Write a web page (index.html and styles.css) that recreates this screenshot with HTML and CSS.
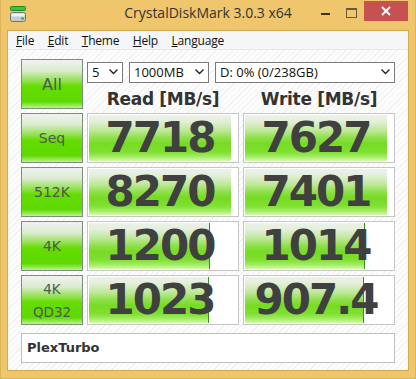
FILE: index.html
```html
<!DOCTYPE html>
<html lang="en">
<head>
  <meta charset="UTF-8" />
  <title>CrystalDiskMark 3.0.3 x64</title>
  <link rel="stylesheet" href="styles.css">
</head>
<body>
  <div class="window">
    <!-- title bar -->
    <div class="titlebar">
      <svg class="app-icon" width="16" height="17" viewBox="0 0 16 17">
        <rect x="0.5" y="0.5" width="15" height="4" rx="1" fill="#3cc43c" stroke="#1f8a1f"/>
        <rect x="0.5" y="6.5" width="15" height="9" rx="2" fill="#c9ccd0" stroke="#6d7278"/>
        <rect x="1.5" y="7.5" width="13" height="3" fill="#eef0f2"/>
        <rect x="11" y="11.5" width="3" height="2" fill="#2fb52f"/>
      </svg>
      <div class="title">CrystalDiskMark 3.0.3 x64</div>
      <div class="controls">
        <div class="ctrl min"><i></i></div>
        <div class="ctrl max"><i></i></div>
        <div class="ctrl close">
          <svg width="10" height="10" viewBox="0 0 10 10">
            <path d="M1 1 L9 9 M9 1 L1 9" stroke="#fff" stroke-width="2"/>
          </svg>
        </div>
      </div>
    </div>

    <div class="client">
      <!-- menu -->
      <div class="menubar">
        <span><u>F</u>ile</span>
        <span><u>E</u>dit</span>
        <span><u>T</u>heme</span>
        <span><u>H</u>elp</span>
        <span><u>L</u>anguage</span>
      </div>

      <div class="main">
        <div class="grid">
          <div class="btn btn-all">All</div>
          <div class="top">
            <div class="selects">
              <div class="sel sel-count">5<svg class="chev" width="9" height="6" viewBox="0 0 9 6"><path d="M0.5 0.5 L4.5 4.5 L8.5 0.5" fill="none" stroke="#222" stroke-width="1.4"/></svg></div>
              <div class="sel sel-size">1000MB<svg class="chev" width="9" height="6" viewBox="0 0 9 6"><path d="M0.5 0.5 L4.5 4.5 L8.5 0.5" fill="none" stroke="#222" stroke-width="1.4"/></svg></div>
              <div class="sel sel-drive">D: 0% (0/238GB)<svg class="chev" width="9" height="6" viewBox="0 0 9 6"><path d="M0.5 0.5 L4.5 4.5 L8.5 0.5" fill="none" stroke="#222" stroke-width="1.4"/></svg></div>
            </div>
            <div class="heads">
              <div>Read [MB/s]</div>
              <div>Write [MB/s]</div>
            </div>
          </div>

          <div class="btn">Seq</div>
          <div class="cell"><div class="bar" style="width: 94.6%"></div><span>7718</span></div>
          <div class="cell"><div class="bar" style="width: 94.6%"></div><span>7627</span></div>

          <div class="btn">512K</div>
          <div class="cell"><div class="bar" style="width: 94.6%"></div><span>8270</span></div>
          <div class="cell"><div class="bar" style="width: 94.6%"></div><span>7401</span></div>

          <div class="btn">4K</div>
          <div class="cell"><div class="bar part" style="width: 80.4%"></div><span>1200</span></div>
          <div class="cell"><div class="bar part" style="width: 80%"></div><span>1014</span></div>

          <div class="btn btn-two">4K<br>QD32</div>
          <div class="cell"><div class="bar part" style="width: 79.8%"></div><span>1023</span></div>
          <div class="cell"><div class="bar part" style="width: 79.4%"></div><span>907.4</span></div>
        </div>

        <div class="comment">PlexTurbo</div>
      </div>
    </div>
  </div>
</body>
</html>
```

FILE: styles.css
```css
html, body {
  margin: 0;
  padding: 0;
}

body {
  width: 416px;
  height: 379px;
  overflow: hidden;
  font-family: 'Open Sans', sans-serif;
  color: #333;
}

.window {
  height: 379px;
  background: #efc66b;
  display: flex;
  flex-direction: column;
  box-sizing: border-box;
  border: 1px solid #dcb25a;
  border-top: none;
}

/* title bar */
.titlebar {
  height: 30px;
  flex: none;
  display: grid;
  grid-template-columns: 1fr auto 1fr;
  align-items: start;
}

.app-icon {
  margin: 6px 0 0 9px;
}

.title {
  font-size: 14px;
  line-height: 30px;
  color: #333;
  margin-top: -2px;
}

.controls {
  display: flex;
  justify-self: end;
  margin-right: 7px;
}

.ctrl {
  width: 26px;
  height: 20px;
  display: flex;
  justify-content: center;
  align-items: flex-start;
}

.min i {
  display: block;
  width: 9px;
  height: 2px;
  margin-top: 13px;
  background: #3a3020;
}

.max i {
  display: block;
  width: 9px;
  height: 7px;
  margin-top: 8px;
  border: 1px solid #6b5a3a;
  border-top-width: 2px;
}

.close {
  width: 44px;
  margin-top: 1px;
  height: 20px;
  background: #c75050;
  align-items: center;
}

/* client area */
.client {
  flex: 1;
  margin: 0 6px 7px 6px;
  border: 1px solid #d4a94c;
  display: flex;
  flex-direction: column;
  background: #fff;
}

.menubar {
  height: 18px;
  background: #f5f6f7;
  border-bottom: 1px solid #e6e8ea;
  display: flex;
  gap: 13.5px;
  padding-left: 8px;
  font-size: 12px;
  letter-spacing: -0.2px;
  line-height: 19px;
  color: #111;
}

.menubar u {
  text-underline-offset: 1px;
}

.main {
  flex: 1;
  padding: 9px 13px 0 13px;
  background: repeating-linear-gradient(135deg, #fdfdfd 0, #fdfdfd 3px, #f1f1f1 3px, #f1f1f1 4px);
}

.grid {
  display: grid;
  grid-template-columns: 62px 152px 152px;
  grid-auto-rows: 50px;
  gap: 4px;
}

/* test buttons */
.btn {
  box-sizing: border-box;
  border: 1px solid #7e8e7e;
  background: linear-gradient(#f1f2f1 0%, #dbecd0 22%, #90e04c 44%, #64dc00 55%, #5ed900 86%, #8fe84c 94%, #bdf590 100%);
  display: flex;
  align-items: center;
  justify-content: center;
  text-align: center;
  font-family: 'DejaVu Sans', sans-serif;
  font-size: 14px;
  color: #4e584e;
}

.btn-all {
  font-size: 16px;
}

.btn-two {
  font-size: 13.5px;
  line-height: 23px;
  padding-top: 1px;
}

/* top row */
.top {
  grid-column: 2 / 4;
}

.selects {
  display: flex;
  gap: 6px;
  margin-top: 3px;
}

.sel {
  box-sizing: border-box;
  height: 21px;
  border: 1px solid #7a7a7a;
  background: #fff;
  font-size: 13px;
  line-height: 19px;
  padding-left: 4px;
  display: flex;
  align-items: center;
  justify-content: space-between;
  color: #111;
}

.chev {
  margin-right: 4px;
  margin-top: -2px;
}

.sel-count {
  width: 36px;
}

.sel-size {
  width: 80px;
}

.sel-drive {
  flex: 1;
}

.heads {
  display: grid;
  grid-template-columns: 152px 152px;
  gap: 4px;
  margin-top: 6px;
  text-align: center;
  font-family: 'DejaVu Sans', sans-serif;
  font-weight: bold;
  font-size: 17px;
  line-height: 20px;
  letter-spacing: -0.3px;
  color: #333;
}

/* result cells */
.cell {
  position: relative;
  box-sizing: border-box;
  border: 1px solid #c6c6c6;
  background: #fff;
  padding: 1px;
}

.bar {
  position: absolute;
  top: 1px;
  bottom: 1px;
  left: 1px;
  background: linear-gradient(#eef1ec 0%, #e2efd9 14%, #bde896 34%, #8ee04a 50%, #76dc22 62%, #7ee030 80%, #a4ec66 91%, #d2f9ae 100%);
}

.bar.part {
  box-sizing: border-box;
  border-right: 1px solid #3b8c24;
}

.cell span {
  position: relative;
  display: block;
  text-align: center;
  padding-right: 6px;
  font-family: 'DejaVu Sans', sans-serif;
  font-weight: bold;
  font-size: 42px;
  line-height: 46px;
  letter-spacing: -2px;
  color: #404040;
}

/* comment */
.comment {
  margin-top: 8px;
  box-sizing: border-box;
  height: 30px;
  border: 1px solid #c0c0c0;
  background: #fff;
  padding-left: 5px;
  font-family: 'DejaVu Sans', sans-serif;
  font-weight: bold;
  font-size: 13px;
  line-height: 28px;
  color: #333;
}
```
